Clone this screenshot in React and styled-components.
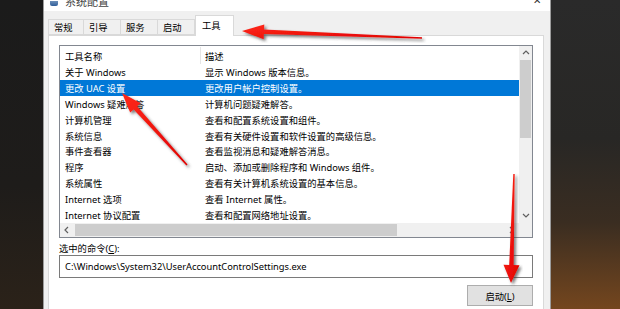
import React from 'react';
import styled, { createGlobalStyle } from 'styled-components';

const FONT = `"Noto Sans", "Noto Sans CJK SC", sans-serif`;

const GlobalStyle = createGlobalStyle`
  html, body {
    margin: 0;
    padding: 0;
  }
  body {
    width: 620px;
    height: 309px;
    overflow: hidden;
    background: #1c1c1c;
    font-family: ${FONT};
    font-size: 9.3px;
    color: #000;
  }
`;

const tabs = ['常规', '引导', '服务', '启动', '工具'];
const tabWidths = [36, 37, 37, 37, 39];

const tools = [
  ['关于 Windows', '显示 Windows 版本信息。'],
  ['更改 UAC 设置', '更改用户帐户控制设置。'],
  ['Windows 疑难解答', '计算机问题疑难解答。'],
  ['计算机管理', '查看和配置系统设置和组件。'],
  ['系统信息', '查看有关硬件设置和软件设置的高级信息。'],
  ['事件查看器', '查看监视消息和疑难解答消息。'],
  ['程序', '启动、添加或删除程序和 Windows 组件。'],
  ['系统属性', '查看有关计算机系统设置的基本信息。'],
  ['Internet 选项', '查看 Internet 属性。'],
  ['Internet 协议配置', '查看和配置网络地址设置。'],
];

// polygon for a tapered arrow from tail to tip
const arrowPoints = (tail, tip, headLen, headW, tailW, neckW) => {
  const dx = tip[0] - tail[0];
  const dy = tip[1] - tail[1];
  const len = Math.hypot(dx, dy);
  const ux = dx / len;
  const uy = dy / len;
  const nx = -uy;
  const ny = ux;
  const bx = tip[0] - ux * headLen;
  const by = tip[1] - uy * headLen;
  const p = (x, y) => `${x.toFixed(1)},${y.toFixed(1)}`;
  return [
    p(tail[0] + nx * tailW / 2, tail[1] + ny * tailW / 2),
    p(bx + nx * neckW / 2, by + ny * neckW / 2),
    p(bx + nx * headW / 2, by + ny * headW / 2),
    p(tip[0], tip[1]),
    p(bx - nx * headW / 2, by - ny * headW / 2),
    p(bx - nx * neckW / 2, by - ny * neckW / 2),
    p(tail[0] - nx * tailW / 2, tail[1] - ny * tailW / 2),
  ].join(' ');
};

const arrows = [
  { tail: [422, 38], tip: [242, 31], head: 22, w: 15 },
  { tail: [187, 165], tip: [122, 93], head: 20, w: 14 },
  { tail: [514, 174], tip: [511, 283], head: 18, w: 16 },
];

const Chevron = ({ dir }) => {
  const paths = {
    up: 'M1 5 L4 2 L7 5',
    down: 'M1 2 L4 5 L7 2',
    left: 'M5 1 L2 4 L5 7',
    right: 'M2 1 L5 4 L2 7',
  };
  return (
    <svg width="8" height="8" viewBox="0 0 8 8">
      <path d={paths[dir]} fill="none" stroke="#606060" strokeWidth="1.2" />
    </svg>
  );
};

const App = () => {
  return (
    <>
      <GlobalStyle />
      <Screen>
        <Desk side="left" />
        <Window>
          <TitleBar>
            <AppIcon />
            <Title>系统配置</Title>
            <Close>✕</Close>
          </TitleBar>
          <Body>
            <TabStrip>
              {tabs.map((t, i) => (
                <Tab key={t} $active={i === 4} $w={tabWidths[i]}>
                  {t}
                </Tab>
              ))}
            </TabStrip>
            <Panel>
              <ListView>
                <ListMain>
                  <ListArea>
                    <HeaderRow>
                      <HeadCell $first>工具名称</HeadCell>
                      <HeadCell>描述</HeadCell>
                    </HeaderRow>
                    {tools.map(([name, desc], i) => (
                      <Row key={name} $selected={i === 1}>
                        <NameCell>{name}</NameCell>
                        <DescCell>{desc}</DescCell>
                      </Row>
                    ))}
                  </ListArea>
                  <VScroll>
                    <ScrollBtn>
                      <Chevron dir="up" />
                    </ScrollBtn>
                    <VThumb />
                    <Spacer />
                    <ScrollBtn>
                      <Chevron dir="down" />
                    </ScrollBtn>
                  </VScroll>
                </ListMain>
                <HScrollRow>
                  <HScroll>
                    <ScrollBtn>
                      <Chevron dir="left" />
                    </ScrollBtn>
                    <HThumb />
                    <Spacer />
                    <ScrollBtn>
                      <Chevron dir="right" />
                    </ScrollBtn>
                  </HScroll>
                  <Corner />
                </HScrollRow>
              </ListView>
              <Label>
                选中的命令(<u>C</u>):
              </Label>
              <CommandBox>C:\Windows\System32\UserAccountControlSettings.exe</CommandBox>
              <ButtonRow>
                <Button>
                  启动(<u>L</u>)
                </Button>
              </ButtonRow>
            </Panel>
          </Body>
        </Window>
        <Desk side="right" />
        <Overlay width="620" height="309" viewBox="0 0 620 309">
          <defs>
            <filter id="shadow" x="-20%" y="-20%" width="140%" height="140%">
              <feDropShadow dx="2" dy="2" stdDeviation="1.5" floodColor="#404040" floodOpacity="0.7" />
            </filter>
            <linearGradient id="red" x1="0" y1="0" x2="1" y2="1">
              <stop offset="0" stopColor="#ff2a1a" />
              <stop offset="1" stopColor="#e00000" />
            </linearGradient>
          </defs>
          {arrows.map((a, i) => (
            <polygon
              key={i}
              points={arrowPoints(a.tail, a.tip, a.head, a.w, 1.5, 4.5)}
              fill="url(#red)"
              filter="url(#shadow)"
            />
          ))}
        </Overlay>
      </Screen>
    </>
  );
};

const Screen = styled.div`
  position: relative;
  display: flex;
  width: 620px;
  height: 309px;
  overflow: hidden;
`;

const Desk = styled.div`
  flex: ${(p) => (p.side === 'left' ? '0 0 43px' : '1')};
  background: ${(p) =>
    p.side === 'left'
      ? 'linear-gradient(180deg, #1b1b1b 0%, #1e1c1a 60%, #2b2219 100%)'
      : 'linear-gradient(180deg, #2a2a2a 0%, #282725 45%, #3a2d21 72%, #74461e 100%)'};
`;

const Window = styled.div`
  flex: 0 0 508px;
  display: flex;
  flex-direction: column;
  box-sizing: border-box;
  border-left: 1px solid #9c9c9c;
  border-right: 1px solid #9c9c9c;
  background: #f0f0f0;
`;

const TitleBar = styled.div`
  height: 11px;
  flex: 0 0 11px;
  display: flex;
  align-items: flex-end;
  background: #fff;
  overflow: hidden;
  padding-left: 6px;
  padding-right: 9px;
`;

const AppIcon = styled.div`
  width: 8px;
  height: 5px;
  margin-bottom: 5px;
  border-radius: 0 0 2px 2px;
  background: linear-gradient(180deg, #6d8fb8, #2f5e9a);
`;

const Title = styled.div`
  margin-left: 7px;
  font-size: 11px;
  line-height: 12px;
  margin-bottom: 3px;
  color: #444;
  flex: 1;
`;

const Close = styled.div`
  font-size: 10px;
  line-height: 10px;
  margin-bottom: 6px;
  color: #333;
`;

const Body = styled.div`
  flex: 1;
  display: flex;
  flex-direction: column;
  padding: 0 6px 0 4px;
`;

const TabStrip = styled.div`
  height: 24px;
  display: flex;
  align-items: flex-end;
  position: relative;
  z-index: 1;
`;

const Tab = styled.div`
  box-sizing: border-box;
  width: ${(p) => p.$w}px;
  height: ${(p) => (p.$active ? 21 : 16)}px;
  margin-bottom: ${(p) => (p.$active ? -1 : 0)}px;
  padding: ${(p) => (p.$active ? '3px 0 0 6px' : '1px 0 0 5px')};
  background: ${(p) => (p.$active ? '#fff' : '#f0f0f0')};
  border: 1px solid #d9d9d9;
  border-bottom: ${(p) => (p.$active ? 'none' : '1px solid #d9d9d9')};
  border-left: ${(p) => (p.$active ? '1px solid #d9d9d9' : 'none')};
  line-height: 13px;
  &:first-child {
    border-left: 1px solid #d9d9d9;
  }
`;

const Panel = styled.div`
  flex: 1;
  background: #fff;
  border: 1px solid #d9d9d9;
  border-bottom: none;
  padding: 9px 10px 0 10px;
`;

const ListView = styled.div`
  border: 1px solid #828790;
  display: flex;
  flex-direction: column;
`;

const ListMain = styled.div`
  display: flex;
  height: 177px;
`;

const ListArea = styled.div`
  flex: 1;
  overflow: hidden;
`;

const HeaderRow = styled.div`
  display: flex;
  height: 18px;
  align-items: flex-end;
`;

const HeadCell = styled.div`
  box-sizing: border-box;
  width: ${(p) => (p.$first ? '141px' : 'auto')};
  height: 17px;
  line-height: 15px;
  padding-top: 2px;
  padding-left: ${(p) => (p.$first ? 5 : 4)}px;
  border-right: ${(p) => (p.$first ? '1px solid #e5e5e5' : 'none')};
  color: #000;
`;

const Row = styled.div`
  display: flex;
  box-sizing: border-box;
  height: 15.9px;
  padding-top: 1px;
  line-height: 15px;
  background: ${(p) => (p.$selected ? '#0078d7' : 'transparent')};
  color: ${(p) => (p.$selected ? '#fff' : '#000')};
  white-space: nowrap;
`;

const NameCell = styled.div`
  box-sizing: border-box;
  width: 141px;
  padding-left: 5px;
`;

const DescCell = styled.div`
  padding-left: 4px;
`;

const VScroll = styled.div`
  width: 13px;
  display: flex;
  flex-direction: column;
  background: #f0f0f0;
`;

const ScrollBtn = styled.div`
  flex: 0 0 14px;
  display: flex;
  align-items: center;
  justify-content: center;
`;

const VThumb = styled.div`
  height: 78px;
  margin: 0 1px;
  background: #cdcdcd;
`;

const Spacer = styled.div`
  flex: 1;
`;

const HScrollRow = styled.div`
  display: flex;
  height: 14px;
`;

const HScroll = styled.div`
  flex: 1;
  display: flex;
  align-items: stretch;
  background: #f0f0f0;
`;

const HThumb = styled.div`
  width: 322px;
  margin: 1px 0 1px 1px;
  background: #cdcdcd;
`;

const Corner = styled.div`
  width: 13px;
  background: #f0f0f0;
`;

const Label = styled.div`
  margin-top: 4px;
  line-height: 13px;
  height: 13px;
`;

const CommandBox = styled.div`
  box-sizing: border-box;
  height: 23px;
  border: 1px solid #7a7a7a;
  padding-left: 5px;
  line-height: 22px;
  white-space: nowrap;
  font-size: 9.3px;
`;

const ButtonRow = styled.div`
  display: flex;
  justify-content: flex-end;
  margin-top: 7px;
`;

const Button = styled.div`
  box-sizing: border-box;
  width: 66px;
  height: 21px;
  padding-top: 1px;
  background: #e1e1e1;
  border: 1px solid #adadad;
  display: flex;
  align-items: center;
  justify-content: center;
`;

const Overlay = styled.svg`
  position: absolute;
  left: 0;
  top: 0;
  pointer-events: none;
`;

export default App;
